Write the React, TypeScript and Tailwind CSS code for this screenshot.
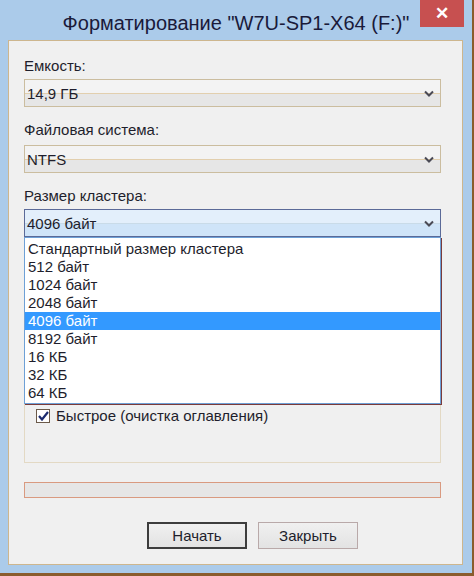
import { useState } from "react";

const sizes = [
  "Стандартный размер кластера",
  "512 байт",
  "1024 байт",
  "2048 байт",
  "4096 байт",
  "8192 байт",
  "16 КБ",
  "32 КБ",
  "64 КБ",
];

const Chevron = () => (
  <svg width="10" height="7" viewBox="0 0 10 7" className="shrink-0">
    <path d="M1 1.5 L5 5.5 L9 1.5" fill="none" stroke="#4a4a55" strokeWidth="2" />
  </svg>
);

const Combo = ({ value, focused }: { value: string; focused?: boolean }) => (
  <div
    className={
      focused
        ? "h-[28px] border border-[#5b6a98] flex flex-col relative"
        : "h-[28px] border border-[#cbbd9f] flex flex-col relative"
    }
  >
    <div className={focused ? "flex-1 bg-[#e3effb]" : "flex-1 bg-[#f3f3f3]"} />
    <div className={focused ? "h-px bg-[#c9dbe8]" : "h-px bg-[#e2cfae]"} />
    <div className={focused ? "flex-1 bg-[#cfe4f8]" : "flex-1 bg-[#e6e6e6]"} />
    <div className="absolute inset-0 flex items-center justify-between pl-[2px] pr-[6px]">
      <span>{value}</span>
      <Chevron />
    </div>
  </div>
);

export default function App() {
  const [selected] = useState(4);

  return (
    <div
      className="w-[474px] h-[576px] bg-[#abcbea] border-r-2 border-b-[3px] border-[#8a5c2e] flex flex-col text-[15px] leading-[17px] text-[#1e1e2c]"
      style={{ fontFamily: '"Liberation Sans", Arial, sans-serif' }}
    >
      {/* title bar */}
      <div className="h-[40px] grid grid-cols-[1fr_auto_1fr] pl-[8px] pr-[8px]">
        <div />
        <div className="text-[20px] leading-[40px] pt-[3px] text-[#1a1a3a]">
          Форматирование "W7U-SP1-X64 (F:)"
        </div>
        <div className="flex justify-end">
          <div className="w-[44px] h-[27px] bg-[#c75050] flex items-center justify-center text-white text-[17px] font-bold">
            ✕
          </div>
        </div>
      </div>

      {/* client area */}
      <div className="ml-[8px] mr-[9px] h-[525px] bg-[#f0f0f0] border border-[#cdb68e] pt-[16px] pl-[15px] pr-[21px] flex flex-col">
        <div className="h-[17px]">Емкость:</div>
        <div className="mt-[5px]">
          <Combo value="14,9 ГБ" />
        </div>
        <div className="h-[17px] mt-[14px]">Файловая система:</div>
        <div className="mt-[7px]">
          <Combo value="NTFS" />
        </div>
        <div className="h-[17px] mt-[14px]">Размер кластера:</div>
        <div className="mt-[5px]">
          <Combo value="4096 байт" focused />
        </div>

        <div className="relative">
          {/* options group (mostly hidden by the open list) */}
          <div className="mt-[63px] h-[163px] border border-[#e3d9c4] pt-[106px] pl-[11px] flex flex-col">
            <div className="flex items-center gap-[6px]">
              <div className="w-[14px] h-[14px] border border-[#6b5a4a] bg-white flex items-center justify-center">
                <svg width="11" height="10" viewBox="0 0 11 10">
                  <path d="M1 5 L4 8.5 L10 1" fill="none" stroke="#1c2a6e" strokeWidth="2.2" />
                </svg>
              </div>
              <span>Быстрое (очистка оглавления)</span>
            </div>
          </div>

          {/* open dropdown */}
          <div className="absolute top-0 left-0 right-0 bg-white border border-[#6ea0d6] pt-[2px] pb-[1px] shadow-[1px_1px_0_#7a3b3b]">
            {sizes.map((s, i) => (
              <div
                key={s}
                className={
                  i === selected
                    ? "h-[18px] leading-[18px] pl-[3px] bg-[#3399ff] text-white"
                    : "h-[18px] leading-[18px] pl-[3px]"
                }
              >
                {s}
              </div>
            ))}
          </div>
        </div>

        {/* progress */}
        <div className="mt-[19px] h-[16px] border border-[#d99a80] bg-[#e6e6e6]" />

        {/* buttons */}
        <div className="mt-[24px] flex gap-[11px] pl-[123px]">
          <button className="w-[100px] h-[27px] border-2 border-[#3d3d3d] bg-gradient-to-b from-[#f0f0f0] to-[#e3e3e3]">
            Начать
          </button>
          <button className="w-[100px] h-[27px] border border-[#b9a9a9] bg-gradient-to-b from-[#f0f0f0] to-[#e3e3e3]">
            Закрыть
          </button>
        </div>
      </div>
    </div>
  );
}
